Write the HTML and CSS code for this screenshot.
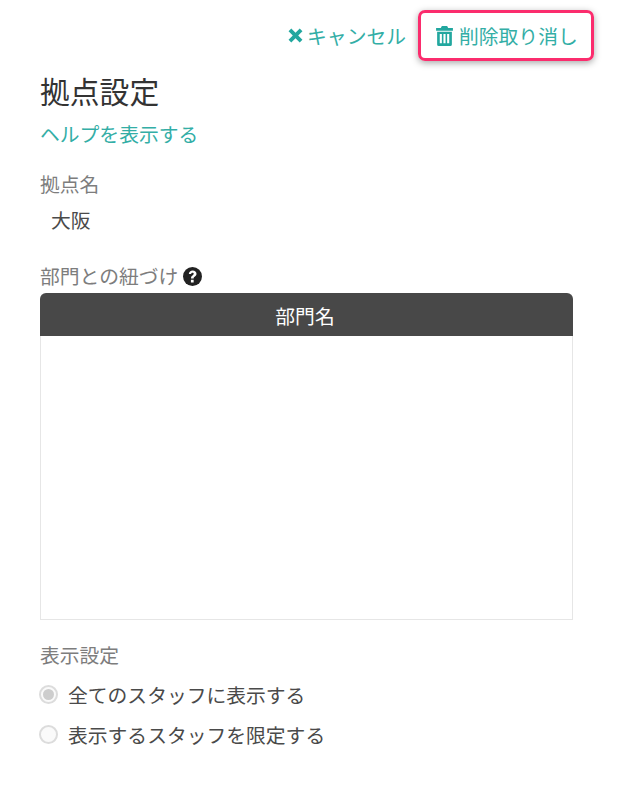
FILE: index.html
```html
<!DOCTYPE html>
<html lang="ja">
<head>
<meta charset="utf-8">
<title>拠点設定</title>
<link rel="stylesheet" href="styles.css">
</head>
<body>
<div class="page">
  <div class="actions">
    <a class="action action-cancel">
      <svg class="icon-x" viewBox="0 0 16 16"><path d="M3.500 .6 8 5.100 12.500 .6 15.400 3.500 10.900 8l4.500 4.500-2.900 2.900L8 10.900l-4.500 4.500-2.900-2.900L5.100 8 .6 3.500z"/></svg>
      <span>キャンセル</span>
    </a>
    <a class="action action-undo">
      <svg class="icon-trash" viewBox="0 0 16 19"><path d="M5.500 0h5l1 2H16v2.400H0V2h4.500zM1 5.500h14V17.500A1.500 1.500 0 0 1 13.500 19h-11A1.500 1.500 0 0 1 1 17.500zM3.500 7.500v9h2v-9zM7 7.500v9h2v-9zM10.500 7.500v9h2v-9z" fill-rule="evenodd"/></svg>
      <span>削除取り消し</span>
    </a>
  </div>
  <h1 class="title">拠点設定</h1>
  <a class="help">ヘルプを表示する</a>
  <div class="label name-label">拠点名</div>
  <div class="value">大阪</div>
  <div class="label dept-label">部門との紐づけ
    <svg class="icon-q" viewBox="0 0 18 18"><circle cx="9" cy="9" r="9"/><path d="M5.500 6.700C5.700 4.600 7.200 3.400 9.200 3.400c2.100 0 3.600 1.300 3.600 3.100 0 1.300-.7 2.100-1.700 2.700-.8.500-1 .8-1 1.500v.3H7.600v-.5c0-1.200.5-1.900 1.400-2.500.8-.5 1.200-.9 1.200-1.500 0-.7-.5-1.100-1.100-1.100-.8 0-1.300.5-1.400 1.300zM7.500 12h2.600v2.600H7.500z" fill="#fff"/></svg>
  </div>
  <div class="table">
    <div class="table-head">部門名</div>
    <div class="table-body"></div>
  </div>
  <div class="label display-label">表示設定</div>
  <div class="radio-row"><span class="radio radio-on"></span>全てのスタッフに表示する</div>
  <div class="radio-row"><span class="radio"></span>表示するスタッフを限定する</div>
</div>
</body>
</html>
```
FILE: styles.css
```css
* { box-sizing: border-box; }
html, body { margin: 0; background: #fff; }
body { font-family: "Noto Sans CJK JP", "Noto Sans", sans-serif; color: #4a4a4a; font-size: 19.800px; }
.page { width: 632px; height: 800px; padding: 0 59px 0 40px; overflow: hidden; }
.actions { display: flex; justify-content: flex-end; align-items: center; margin: 10px -21px 0 0; }
.action { display: flex; align-items: center; color: #33aea6; height: 51px; white-space: nowrap; }
.action-cancel { gap: 4px; margin-right: 12px; }
.action-undo { gap: 6px; padding: 0 0 0 15px; width: 176px; border: 3px solid #fb2c6d; border-radius: 7px; box-shadow: 0 2px 7px rgba(0,0,0,.35); }
.icon-x { width: 15px; height: 15px; fill: #22a79f; flex: none; }
.icon-trash { width: 17px; height: 20px; fill: #22a79f; flex: none; }
.title { margin: 7px 0 0; font-size: 29.800px; font-weight: 400; line-height: 44px; color: #333; }
.help { display: block; margin-top: 7px; line-height: 30px; color: #33aea6; }
.label { color: #7d7d7d; line-height: 30px; }
.name-label { margin-top: 20px; }
.value { margin-top: 6px; padding-left: 11px; line-height: 30px; }
.dept-label { display: flex; align-items: center; gap: 5px; margin-top: 26px; }
.icon-q { width: 19px; height: 19px; fill: #222; }
.table { margin-top: 2px; }
.table-head { height: 43px; padding-right: 3px; background: #484848; color: #fff; border-radius: 6px 6px 0 0; text-align: center; line-height: 45px; }
.table-body { height: 284px; border: 1px solid #e6e6e6; border-top: 0; }
.display-label { margin-top: 20px; }
.radio-row { display: flex; align-items: center; gap: 9px; height: 40px; color: #4a4a4a; }
.display-label + .radio-row { margin-top: 4px; }
.radio { flex: none; width: 19px; height: 19px; margin-left: -1px; margin-right: 1px; border-radius: 50%; border: 2px solid #dcdcdc; background: #fafafa; display: flex; align-items: center; justify-content: center; }
.radio-on::after { content: ""; width: 11px; height: 11px; border-radius: 50%; background: #cdcdcd; }
```
